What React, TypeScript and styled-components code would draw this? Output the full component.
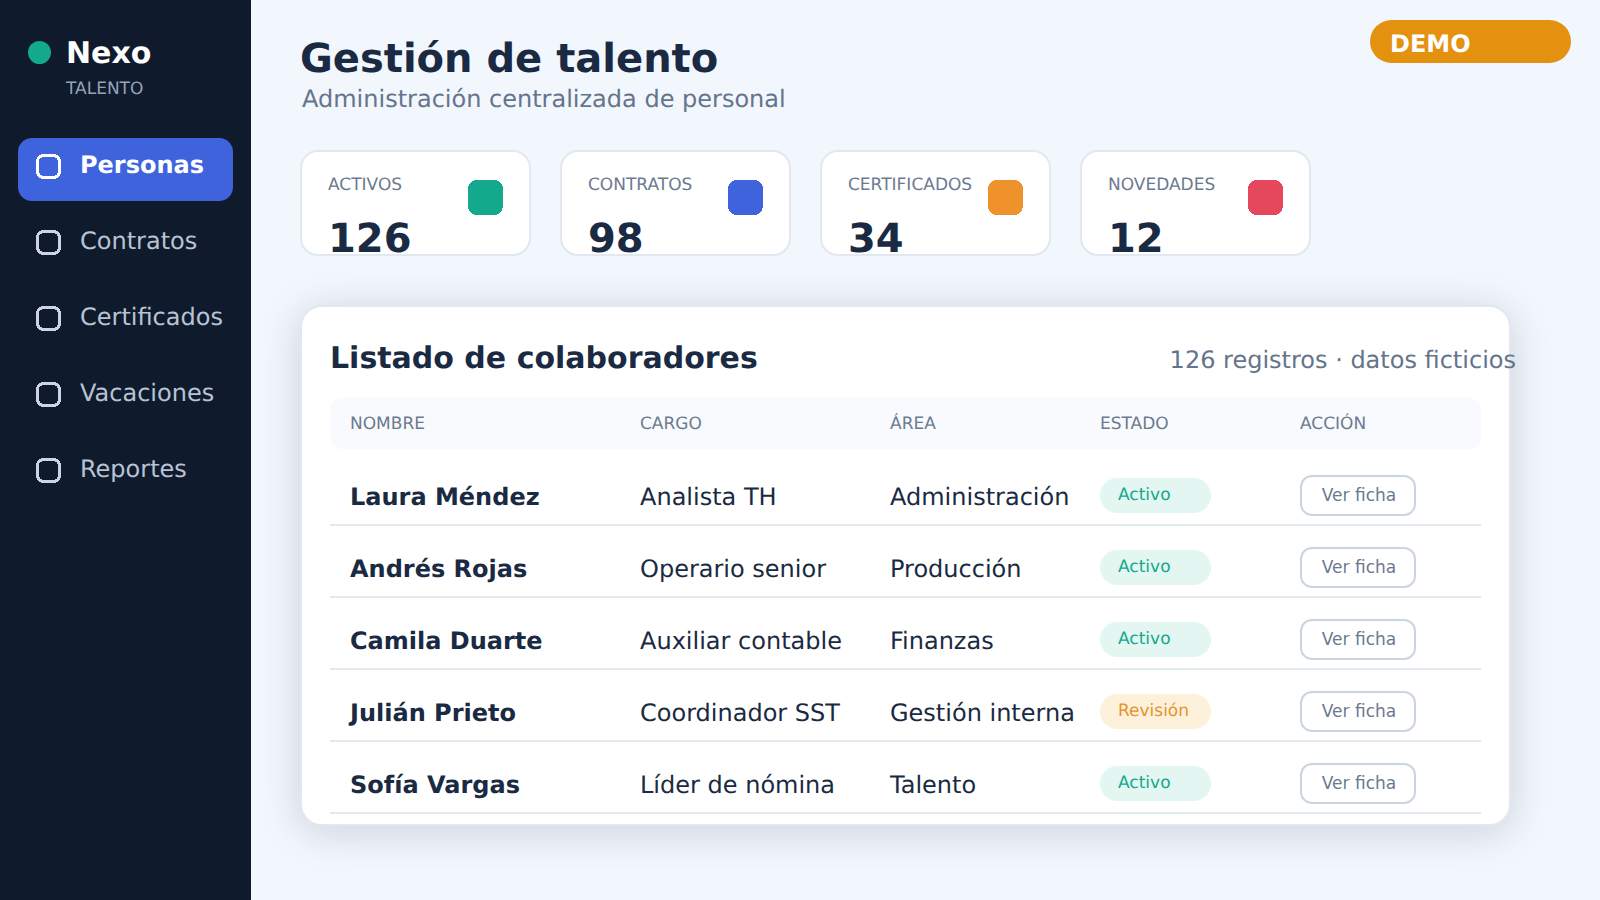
import React from "react";
import styled, { createGlobalStyle } from "styled-components";

const GlobalStyle = createGlobalStyle`
  html, body {
    margin: 0;
    padding: 0;
    height: 100%;
    background: #f2f6fd;
    font-family: "DejaVu Sans", sans-serif;
    text-rendering: geometricPrecision;
    overflow: hidden;
  }
`;

const Page = styled.div`
  width: 1600px;
  height: 900px;
  display: flex;
  position: relative;
  overflow: hidden;
`;

const Sidebar = styled.aside`
  width: 251px;
  flex: none;
  height: 900px;
  background: #0f1b2d;
  box-sizing: border-box;
  padding: 37px 18px 0;
`;

const Brand = styled.div`
  display: flex;
  align-items: center;
  gap: 15px;
  padding-left: 10px;
  height: 32px;
`;

const BrandDot = styled.span`
  width: 23px;
  height: 23px;
  border-radius: 50%;
  background: #12a98c;
  position: relative;
  top: -1px;
`;

const BrandName = styled.div`
  font-size: 30px;
  font-weight: 700;
  color: #fff;
`;

const BrandSub = styled.div`
  margin: 10px 0 0 48px;
  font-size: 17px;
  line-height: 20px;
  color: #94a3b8;
`;

const Nav = styled.nav`
  margin-top: 39px;
  display: flex;
  flex-direction: column;
  gap: 13px;
`;

const NavItem = styled.div<{ $active?: boolean }>`
  width: 215px;
  height: 63px;
  box-sizing: border-box;
  padding: 0 18px 6px;
  border-radius: 14px;
  display: flex;
  align-items: center;
  gap: 19px;
  white-space: nowrap;
  font-size: 24px;
  font-weight: ${(p) => (p.$active ? 700 : 400)};
  color: ${(p) => (p.$active ? "#fff" : "#b8c4d4")};
  background: ${(p) => (p.$active ? "#3e63dd" : "transparent")};
`;

const NavIconSvg = styled.svg`
  width: 25px;
  height: 25px;
  flex: none;
`;

const NavLabel = styled.span`
  position: relative;
  top: -2px;
`;

const Main = styled.main`
  flex: 1;
  padding: 35px 0 0 49px;
`;

const Title = styled.h1`
  margin: 0;
  font-size: 40px;
  line-height: 48px;
  font-weight: 700;
  color: #1a2a42;
`;

const Subtitle = styled.p`
  margin: 1px 0 0 2px;
  font-size: 24px;
  line-height: 30px;
  color: #64748b;
`;

const DemoPill = styled.div`
  position: absolute;
  top: 20px;
  left: 1370px;
  width: 201px;
  height: 43px;
  box-sizing: border-box;
  padding-left: 20px;
  border-radius: 22px;
  background: #e59110;
  color: #fff;
  font-size: 24px;
  font-weight: 700;
  line-height: 48px;
`;

const Stats = styled.div`
  margin-top: 36px;
  display: flex;
  gap: 29px;
`;

const StatCard = styled.div`
  width: 231px;
  height: 106px;
  box-sizing: border-box;
  padding: 23px 26px 0;
  background: #fff;
  border: 2px solid #e2e8f0;
  border-radius: 18px;
  position: relative;
  overflow: hidden;
`;

const StatLabel = styled.div`
  font-size: 17px;
  line-height: 20px;
  color: #6b7a90;
`;

const StatValue = styled.div`
  margin-top: 20px;
  font-size: 40px;
  line-height: 48px;
  font-weight: 700;
  color: #1a2a42;
`;

const StatIconSvg = styled.svg`
  position: absolute;
  top: 28px;
  right: 26px;
  width: 35px;
  height: 35px;
`;

const Panel = styled.section`
  margin-top: 49px;
  width: 1211px;
  height: 521px;
  box-sizing: border-box;
  padding: 29px 28px 0;
  background: #fff;
  border: 2px solid #e2e8f0;
  border-radius: 22px;
  box-shadow: 0 6px 40px rgba(15, 27, 45, 0.16);
`;

const PanelHead = styled.div`
  display: flex;
  justify-content: space-between;
  align-items: center;
  height: 44px;
  white-space: nowrap;
`;

const PanelTitle = styled.h2`
  margin: 0;
  font-size: 30px;
  font-weight: 700;
  color: #1a2a42;
`;

const PanelMeta = styled.div`
  font-size: 24px;
  color: #64748b;
  position: relative;
  top: 2px;
  margin-right: -35px;
`;

const TableHead = styled.div`
  margin: 18px 0 5px;
  height: 51px;
  border-radius: 12px;
  background: #f8fafd;
  display: grid;
  grid-template-columns: 290px 250px 210px 200px 200px;
  align-items: center;
  font-size: 17px;
  color: #6b7a90;
`;

const HeadCell = styled.div`
  padding-left: 20px;
`;

const Row = styled.div`
  height: 72px;
  box-sizing: border-box;
  border-bottom: 2px solid #e2e8f0;
  display: grid;
  grid-template-columns: 290px 250px 210px 200px 200px;
  align-items: center;
  font-size: 24px;
  color: #1a2a42;
`;

const Cell = styled.div<{ $strong?: boolean }>`
  padding: 16px 0 0 20px;
  white-space: nowrap;
  font-weight: ${(p) => (p.$strong ? 700 : 400)};
`;

const ActionCell = styled.div`
  padding: 12px 0 0 20px;
  display: flex;
`;

const Badge = styled.span<{ $tone: "ok" | "warn" }>`
  display: block;
  width: 111px;
  height: 35px;
  box-sizing: border-box;
  padding-left: 18px;
  border-radius: 18px;
  font-size: 17px;
  line-height: 34px;
  color: ${(p) => (p.$tone === "ok" ? "#12a98c" : "#e8912a")};
  background: ${(p) => (p.$tone === "ok" ? "#e3f6f1" : "#fdf1dc")};
`;

const FichaButton = styled.button`
  width: 116px;
  height: 41px;
  box-sizing: border-box;
  padding: 0 0 1px 2px;
  background: #fff;
  border: 2px solid #cbd5e1;
  border-radius: 12px;
  font-family: inherit;
  font-size: 17px;
  color: #6b7a90;
`;

const NavIcon = ({ color }: { color: string }) => (
  <NavIconSvg viewBox="0 0 25 25" shapeRendering="crispEdges">
    <rect x="1.5" y="1.5" width="22" height="22" rx="6" fill="none" stroke={color} strokeWidth="3" />
  </NavIconSvg>
);

const StatIcon = ({ color }: { color: string }) => (
  <StatIconSvg viewBox="0 0 35 35" shapeRendering="crispEdges">
    <rect width="35" height="35" rx="9" fill={color} />
  </StatIconSvg>
);

const stats = [
  { label: "ACTIVOS", value: "126", color: "#12a98c" },
  { label: "CONTRATOS", value: "98", color: "#3e63dd" },
  { label: "CERTIFICADOS", value: "34", color: "#f0922b" },
  { label: "NOVEDADES", value: "12", color: "#e5485d" },
];

const people: { name: string; role: string; area: string; state: string; tone: "ok" | "warn" }[] = [
  { name: "Laura Méndez", role: "Analista TH", area: "Administración", state: "Activo", tone: "ok" },
  { name: "Andrés Rojas", role: "Operario senior", area: "Producción", state: "Activo", tone: "ok" },
  { name: "Camila Duarte", role: "Auxiliar contable", area: "Finanzas", state: "Activo", tone: "ok" },
  { name: "Julián Prieto", role: "Coordinador SST", area: "Gestión interna", state: "Revisión", tone: "warn" },
  { name: "Sofía Vargas", role: "Líder de nómina", area: "Talento", state: "Activo", tone: "ok" },
];

const navItems = ["Personas", "Contratos", "Certificados", "Vacaciones", "Reportes"];
const columns = ["NOMBRE", "CARGO", "ÁREA", "ESTADO", "ACCIÓN"];

const App = () => (
  <Page>
    <GlobalStyle />
    <Sidebar>
      <Brand>
        <BrandDot />
        <BrandName>Nexo</BrandName>
      </Brand>
      <BrandSub>TALENTO</BrandSub>
      <Nav>
        {navItems.map((item, idx) => (
          <NavItem key={item} $active={idx === 0}>
            <NavIcon color={idx === 0 ? "#fff" : "#cbd5e1"} />
            <NavLabel>{item}</NavLabel>
          </NavItem>
        ))}
      </Nav>
    </Sidebar>
    <Main>
      <Title>Gestión de talento</Title>
      <Subtitle>Administración centralizada de personal</Subtitle>
      <Stats>
        {stats.map((s) => (
          <StatCard key={s.label}>
            <StatLabel>{s.label}</StatLabel>
            <StatValue>{s.value}</StatValue>
            <StatIcon color={s.color} />
          </StatCard>
        ))}
      </Stats>
      <Panel>
        <PanelHead>
          <PanelTitle>Listado de colaboradores</PanelTitle>
          <PanelMeta>126 registros · datos ficticios</PanelMeta>
        </PanelHead>
        <TableHead>
          {columns.map((c) => (
            <HeadCell key={c}>{c}</HeadCell>
          ))}
        </TableHead>
        {people.map((p) => (
          <Row key={p.name}>
            <Cell $strong>{p.name}</Cell>
            <Cell>{p.role}</Cell>
            <Cell>{p.area}</Cell>
            <ActionCell>
              <Badge $tone={p.tone}>{p.state}</Badge>
            </ActionCell>
            <ActionCell>
              <FichaButton>Ver ficha</FichaButton>
            </ActionCell>
          </Row>
        ))}
      </Panel>
    </Main>
    <DemoPill>DEMO</DemoPill>
  </Page>
);

export default App;
